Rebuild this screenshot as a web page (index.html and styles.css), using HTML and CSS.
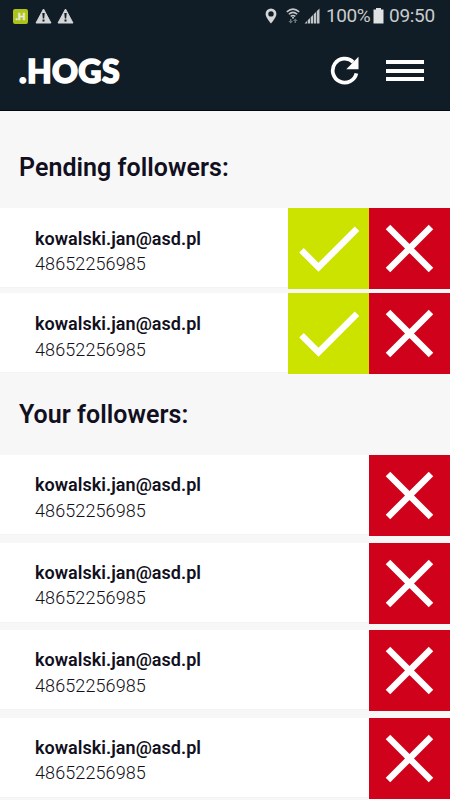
FILE: index.html
```html
<!DOCTYPE html>
<html lang="en">
<head>
<meta charset="utf-8">
<title>.HOGS</title>
<link rel="stylesheet" href="styles.css">
</head>
<body>
<svg class="defs" width="0" height="0">
  <symbol id="warn" viewBox="0 0 17 16"><path d="M8.5 1 16 15H1Z" fill="#d3d5d7" stroke="#d3d5d7" stroke-linejoin="round"/><path d="M7.3 5h2.4l-.5 5.5H7.8zM7.5 11.5h2v2h-2z" fill="#111d26"/></symbol>
  <symbol id="check" viewBox="0 0 81 81"><path d="M13.500 42.300 30.500 59.300 69 20.800" fill="none" stroke="#fff" stroke-width="6.400"/></symbol>
  <symbol id="cross" viewBox="0 0 81 81"><path d="M19 19 62 62M62 19 19 62" fill="none" stroke="#fff" stroke-width="6.400"/></symbol>
</svg>
<header class="header">
  <div class="status">
    <div class="notes">
      <span class="app">.H</span>
      <svg class="warn"><use href="#warn"/></svg>
      <svg class="warn"><use href="#warn"/></svg>
    </div>
    <div class="system">
      <svg class="pin" width="12" height="16" viewBox="0 0 12 16"><path fill-rule="evenodd" d="M6 .5A5.400 5.400 0 0 0 .6 6C.6 9.500 6 15.500 6 15.500S11.400 9.500 11.400 6A5.400 5.400 0 0 0 6 .5ZM6 3.200A2.700 2.700 0 1 1 6 8.600 2.700 2.700 0 0 1 6 3.200Z" fill="#d3d5d7"/></svg>
      <svg class="wifi" width="14" height="16" viewBox="0 0 14 16"><path d="M.8 3.900Q7-1.700 13.200 3.900M2.800 6.200Q7 2.500 11.200 6.200M4.700 8.400Q7 6.500 9.300 8.400" fill="none" stroke="#c3c6c9" stroke-width="1.500"/><circle cx="7" cy="9.700" r="1" fill="#c3c6c9"/><path d="M4.700 15.500 2.400 13H4v-2h1.400v2H7zM9.300 10.500 11.600 13H10v2H8.600v-2H7z" fill="#69737a"/></svg>
      <svg class="signal" width="16" height="16" viewBox="0 0 16 16"><path d="M.5 15.500 3 13v2.500zM3.700 12.300l2.300-2.300v5.500H3.700zM6.700 9.300l2.300-2.300v8.500H6.700zM9.700 6.300l2.300-2.300v11.500H9.700zM12.700 3.300l2.800-2.800v15h-2.800z" fill="#c3c6c9"/></svg>
      <span class="percent">100%</span>
      <svg class="battery" width="11" height="16" viewBox="0 0 11 16"><path d="M3 0h5v1.500h2.500V15.500H.5V1.500H3z" fill="#dfe1e2"/></svg>
      <span class="clock">09:50</span>
    </div>
  </div>
  <div class="bar">
    <div class="logo">.HOGS</div>
    <svg class="refresh" width="30" height="30" viewBox="0 0 30 30"><path d="M26.400 17.300A12 12 0 1 1 23.200 6.100" fill="none" stroke="#fff" stroke-width="3.700"/><path d="M28.500.8V13.200H16.300Z" fill="#fff"/></svg>
    <div class="menu"><i></i><i></i><i></i></div>
  </div>
</header>
<main>
  <h2 class="title">Pending followers:</h2>
  <ul class="list pending">
    <li class="row"><div class="info"><b>kowalski.jan@asd.pl</b><span>48652256985</span></div><svg class="accept"><use href="#check"/></svg><svg class="remove"><use href="#cross"/></svg></li>
    <li class="row"><div class="info"><b>kowalski.jan@asd.pl</b><span>48652256985</span></div><svg class="accept"><use href="#check"/></svg><svg class="remove"><use href="#cross"/></svg></li>
  </ul>
  <h2 class="title yours">Your followers:</h2>
  <ul class="list current">
    <li class="row"><div class="info"><b>kowalski.jan@asd.pl</b><span>48652256985</span></div><svg class="remove"><use href="#cross"/></svg></li>
    <li class="row"><div class="info"><b>kowalski.jan@asd.pl</b><span>48652256985</span></div><svg class="remove"><use href="#cross"/></svg></li>
    <li class="row"><div class="info"><b>kowalski.jan@asd.pl</b><span>48652256985</span></div><svg class="remove"><use href="#cross"/></svg></li>
    <li class="row"><div class="info"><b>kowalski.jan@asd.pl</b><span>48652256985</span></div><svg class="remove"><use href="#cross"/></svg></li>
  </ul>
</main>
</body>
</html>
```
FILE: styles.css
```css
* { box-sizing: border-box; }
html, body { height: 800px; overflow: hidden; }
body { margin: 0; background: #f7f7f7; color: #110f20; font-family: Roboto, sans-serif; }
svg { display: block; flex: none; }
.defs { display: none; }
.header { height: 111px; background: #111d26; border-bottom: 1px solid #02080d; }
.status { height: 32px; display: flex; justify-content: space-between; padding: 0 14px 0 13px; color: #c9ccce; font-size: 19px; line-height: 32px; }
.notes, .system { display: flex; align-items: center; }
.app { width: 15px; height: 15px; border-radius: 2px; background: #adc21a; color: #e5eadc; font: 900 10px/15px Lato, sans-serif; text-align: center; margin-right: 7px; -webkit-text-stroke: .4px #e5eadc; }
.warn { width: 17px; height: 16px; margin-right: 5px; }
.pin { margin-right: 9px; }
.wifi { margin-right: 4px; }
.signal { margin-right: 5px; }
.system { position: relative; left: -1px; }
.percent { width: 47px; letter-spacing: -.4px; white-space: nowrap; padding-left: 1px; margin-right: 1px; }
.battery { margin-right: 5px; }
.clock { width: 46px; letter-spacing: -.3px; }
.bar { height: 77px; display: flex; align-items: center; padding: 0 26px 0 19px; }
.logo { flex: 1; color: #fff; font: 900 32px/40px Lato, sans-serif; letter-spacing: .35px; -webkit-text-stroke: 1.600px #fff; }
.refresh { margin-right: 26px; }
.menu { width: 38px; display: flex; flex-direction: column; gap: 4.500px; }
.menu i { height: 4px; background: #fff; }
.title { margin: 0; padding: 37px 19px 0; height: 96.500px; font-size: 25px; line-height: 40px; font-weight: 600; letter-spacing: .04px; white-space: nowrap; }
.yours { height: 81px; padding-top: 21px; }
.list { margin: 0; padding: 0; list-style: none; display: flex; flex-direction: column; gap: 6.500px; }
.pending { gap: 4.500px; }
.row { display: flex; height: 81px; }
.info { flex: 1; height: 80px; background: #fff; border-bottom: 1px solid #f3f3f3; padding: 18px 0 0 35px; display: flex; flex-direction: column; font-size: 18px; line-height: 25.500px; }
.current .info { padding-top: 17px; }
.info b { font-weight: 600; letter-spacing: .04px; }
.info span { font-weight: 300; letter-spacing: .1px; }
.accept, .remove { width: 81px; height: 81px; }
.accept { background: #cce300; }
.remove { background: #d0021b; }
```
